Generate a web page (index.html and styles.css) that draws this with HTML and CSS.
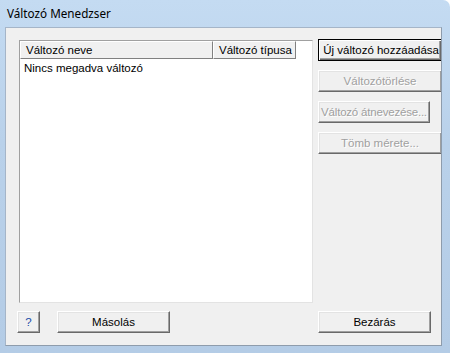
FILE: index.html
```html
<!DOCTYPE html>
<html lang="hu">
<head>
    <meta charset="UTF-8">
    <title>Változó Menedzser</title>
    <link rel="stylesheet" href="styles.css">
</head>
<body>

<div class="window">
    <div class="titlebar">Változó Menedzser</div>
    <div class="client">
        <div class="main">
            <div class="list">
                <div class="list-header">
                    <div class="col col-name">Változó neve</div>
                    <div class="col col-type">Változó típusa</div>
                    <div class="col col-rest"></div>
                </div>
                <div class="list-empty">Nincs megadva változó</div>
            </div>
            <div class="side">
                <button class="btn default wide">Új változó hozzáadása</button>
                <button class="btn wide" disabled>Változótörlése</button>
                <button class="btn rename" disabled>Változó átnevezése...</button>
                <button class="btn wide" disabled>Tömb mérete...</button>
            </div>
        </div>
        <div class="bottom">
            <button class="btn help">?</button>
            <button class="btn copy">Másolás</button>
            <button class="btn close">Bezárás</button>
        </div>
    </div>
</div>

</body>
</html>
```

FILE: styles.css
```css
* {
    box-sizing: border-box;
}
body {
    margin: 0;
    background: #ffffff;
    font-family: 'Liberation Sans', Arial, sans-serif;
    font-size: 11.5px;
    color: #000000;
}
.window {
    width: 450px;
    height: 353px;
    background: linear-gradient(to bottom, #c4dbf2 0%, #b9d1ea 40%, #b4cce6 100%);
    border-top-right-radius: 7px;
    overflow: hidden;
}
.titlebar {
    height: 27px;
    padding: 5px 0 0 7px;
    font-family: 'Noto Sans', sans-serif;
    font-size: 11.7px;
    line-height: 16px;
    color: #000000;
}
.client {
    margin-left: 5px;
    width: 437px;
    height: 319px;
    background: #f0f0f0;
    border: 1px solid #a5b5c8;
    border-right-color: #8e9cac;
    border-bottom-color: #8e9cac;
    overflow: hidden;
    padding-top: 12px;
}
.main {
    display: flex;
    gap: 5px;
    padding-left: 13px;
    height: 263px;
}
.list {
    width: 294px;
    height: 263px;
    flex-shrink: 0;
    background: #ffffff;
    border: 1px solid;
    border-color: #a0a0a0 #e3e3e3 #e3e3e3 #a0a0a0;
}
.list-header {
    display: flex;
    height: 18px;
}
.col {
    height: 18px;
    background: #f0f0f0;
    border: 1px solid;
    border-color: #ffffff #808080 #808080 #ffffff;
    padding: 1px 0 0 5px;
    line-height: 15px;
    font-size: 11.5px;
    white-space: nowrap;
}
.col-name {
    width: 193px;
}
.col-type {
    width: 83px;
    padding-left: 5px;
}
.col-rest {
    flex: 1;
    background: #ffffff;
    border: none;
}
.list-empty {
    padding: 2px 0 0 4px;
    font-size: 11.5px;
    line-height: 14px;
}
.side {
    display: flex;
    flex-direction: column;
    gap: 9px;
    margin-top: -1px;
}
.btn {
    height: 22px;
    padding: 0;
    background: #f0f0f0;
    border: 1px solid;
    border-color: #ffffff #696969 #696969 #ffffff;
    box-shadow: inset -1px -1px 0 #a0a0a0, inset 1px 1px 0 #e3e3e3;
    font-family: 'Liberation Sans', Arial, sans-serif;
    font-size: 11.5px;
    color: #000000;
    white-space: nowrap;
    overflow: hidden;
}
.btn:disabled {
    color: #a0a0a0;
    text-shadow: 1px 1px 0 #ffffff;
}
.btn.default {
    border-color: #000000;
    box-shadow: inset 1px 1px 0 #ffffff, inset -1px -1px 0 #696969, inset -2px -2px 0 #a0a0a0;
}
.btn.wide {
    width: 124px;
    text-align: center;
}
.btn.default.wide {
    text-align: right;
    padding-right: 2px;
}
.btn.rename {
    width: 112px;
    padding: 0 1px;
    letter-spacing: -0.2px;
}
.bottom {
    display: flex;
    margin-top: 8px;
    padding-left: 11px;
}
.btn.help {
    width: 23px;
    color: #1a4ca8;
}
.btn.copy {
    width: 113px;
    margin-left: 17px;
}
.btn.close {
    width: 113px;
    margin-left: 148px;
}
```
